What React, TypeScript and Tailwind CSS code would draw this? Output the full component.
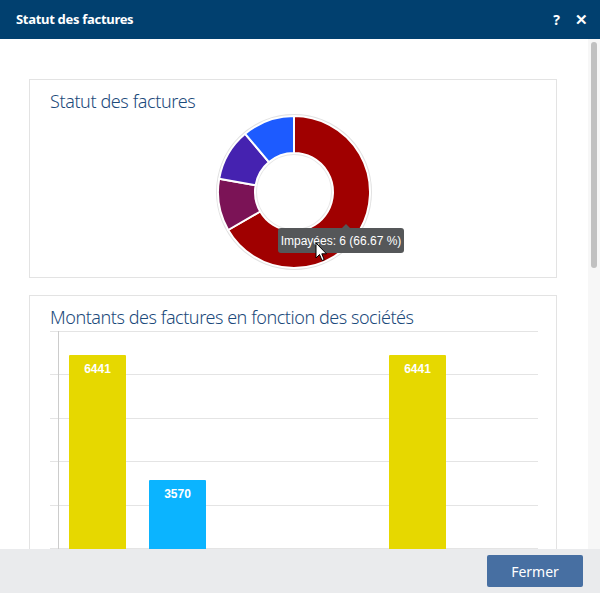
import React from "react"

type Slice = { label: string; value: number; color: string }

const slices: Slice[] = [
  { label: "Impayées", value: 6, color: "#a00000" },
  { label: "Payées", value: 1, color: "#7b1356" },
  { label: "En retard", value: 1, color: "#4522b0" },
  { label: "Brouillon", value: 1, color: "#1d5bff" },
]

const bars = [
  { x: 39, value: 6441, color: "#e6d800" },
  { x: 119, value: 3570, color: "#0bb4ff" },
  { x: 359, value: 6441, color: "#e6d800" },
]

const pt = (cx: number, cy: number, r: number, deg: number) => {
  const a = (deg * Math.PI) / 180
  return [cx + r * Math.sin(a), cy - r * Math.cos(a)]
}

const arcPath = (cx: number, cy: number, r1: number, r2: number, a0: number, a1: number) => {
  const large = a1 - a0 > 180 ? 1 : 0
  const [x0, y0] = pt(cx, cy, r2, a0)
  const [x1, y1] = pt(cx, cy, r2, a1)
  const [x2, y2] = pt(cx, cy, r1, a1)
  const [x3, y3] = pt(cx, cy, r1, a0)
  return `M${x0} ${y0} A${r2} ${r2} 0 ${large} 1 ${x1} ${y1} L${x2} ${y2} A${r1} ${r1} 0 ${large} 0 ${x3} ${y3} Z`
}

const Donut = () => {
  const total = slices.reduce((s, x) => s + x.value, 0)
  let start = 0
  const cx = 264
  const cy = 79
  return (
    <svg width="526" height="164" className="block">
      <circle cx={cx} cy={cy} r={77} fill="none" stroke="#e2e2e2" strokeWidth="2" />
      <circle cx={cx} cy={cy} r={38} fill="none" stroke="#e8e8e8" strokeWidth="2" />
      {slices.map((s) => {
        const a0 = start
        const a1 = start + (s.value / total) * 360
        start = a1
        return <path key={s.label} d={arcPath(cx, cy, 39, 76, a0, a1)} fill={s.color} stroke="#ffffff" strokeWidth="2" strokeLinejoin="round" />
      })}
    </svg>
  )
}

const BarChart = () => {
  const grid = [2, 45, 89, 132, 176, 219]
  return (
    <svg width="526" height="240" className="block">
      {grid.map((y) => (
        <line key={y} x1="20" x2="508" y1={y + 0.5} y2={y + 0.5} stroke="#e4e4e4" strokeWidth="1" />
      ))}
      <line x1="28.5" x2="28.5" y1="2" y2="240" stroke="#cccccc" strokeWidth="1" />
      {bars.map((b, i) => {
        const top = b.value > 5000 ? 26 : 151
        return (
          <g key={i}>
            <rect x={b.x} y={top} width="57" height={240 - top} fill={b.color} rx="1" />
            <text
              x={b.x + 28.5}
              y={top + 18}
              textAnchor="middle"
              fill="#ffffff"
              fontSize="12"
              fontWeight="700"
              fontFamily="'Liberation Sans', Arial, sans-serif"
            >
              {b.value}
            </text>
          </g>
        )
      })}
    </svg>
  )
}

const Cursor = () => (
  <svg width="13" height="20" viewBox="0 0 13 20" className="absolute left-[285px] top-[162px]">
    <path d="M1 1 L1 16 L4.5 12.5 L7 18.5 L9.2 17.6 L6.8 11.8 L11.5 11.8 Z" fill="#ffffff" stroke="#000000" strokeWidth="1" strokeLinejoin="round" />
  </svg>
)

export default function App() {
  return (
    <div className="flex h-[593px] w-[600px] flex-col overflow-hidden bg-white font-['Noto_Sans',sans-serif]">
      <div className="flex h-[39px] shrink-0 items-center justify-between bg-[#01406f] pl-[16px] pr-[12px] text-white">
        <span className="text-[13px] font-bold tracking-[-0.3px]">Statut des factures</span>
        <div className="flex items-center gap-[15px] text-[14px] font-bold">
          <span>?</span>
          <span className="text-[15px]">✕</span>
        </div>
      </div>

      <div className="flex min-h-0 flex-1">
        <div className="min-h-0 flex-1 overflow-hidden pl-[29px] pr-[31px] pt-[40px]">
          <div className="relative h-[199px] border border-[#e3e3e3] bg-white">
            <div className="pl-[20px] pt-[9px] text-[18px] leading-[24px] font-light tracking-[-0.4px] text-[#1c4a7b]">Statut des factures</div>
            <Donut />
            <div className="absolute left-[248px] top-[148px] flex h-[25px] w-[126px] items-center justify-center rounded-[3px] bg-[#555759] font-['Liberation_Sans',Arial,sans-serif] text-[12px] text-white">
              <span className="absolute -top-[4px] left-[63px] h-0 w-0 border-x-[5px] border-b-[5px] border-x-transparent border-b-[#555759]" />
              Impayées: 6 (66.67 %)
            </div>
            <Cursor />
          </div>

          <div className="mt-[17px] h-[400px] border border-[#e3e3e3] bg-white">
            <div className="pl-[20px] pt-[9px] text-[18px] leading-[24px] font-light tracking-[-0.45px] text-[#1c4a7b]">
              Montants des factures en fonction des sociétés
            </div>
            <BarChart />
          </div>
        </div>
        <div className="flex w-[12px] shrink-0 justify-center bg-[#f7f7f7] pt-[3px]">
          <div className="h-[226px] w-[6px] rounded-full bg-[#c1c1c1]" />
        </div>
      </div>

      <div className="flex h-[44px] shrink-0 items-center justify-end bg-[#eaebed] pr-[17px]">
        <button className="h-[32px] w-[96px] rounded-[2px] bg-[#476fa2] text-[14px] text-white">Fermer</button>
      </div>
    </div>
  )
}
